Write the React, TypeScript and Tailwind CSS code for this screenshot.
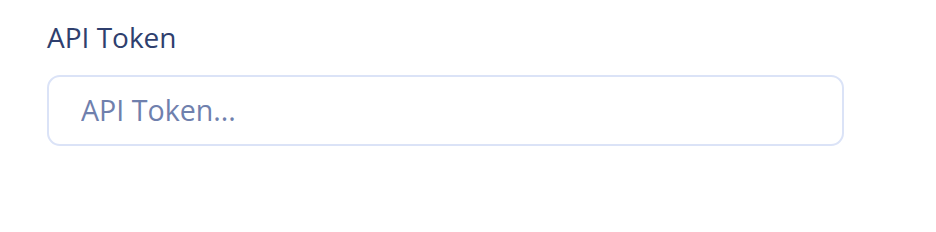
import React from "react";

export default function App() {
  return (
    <div className="w-[936px] h-[232px] bg-white pl-[47px] pt-[20px]" style={{ fontFamily: "'Open Sans', 'Noto Sans', sans-serif" }}>
      <label className="block text-[28px] leading-[34px] text-[#2f3f6e]">API Token</label>
      <div className="mt-[21px] w-[797px] h-[71px] rounded-[13px] border-2 border-[#dbe3f7] flex items-center pl-[32px]">
        <input
          className="w-full outline-none bg-transparent text-[28.6px] text-[#3f4f80] placeholder:text-[#6f80ad]"
          placeholder="API Token..."
          style={{ fontFamily: "'Open Sans', 'Noto Sans', sans-serif" }}
        />
      </div>
    </div>
  );
}
